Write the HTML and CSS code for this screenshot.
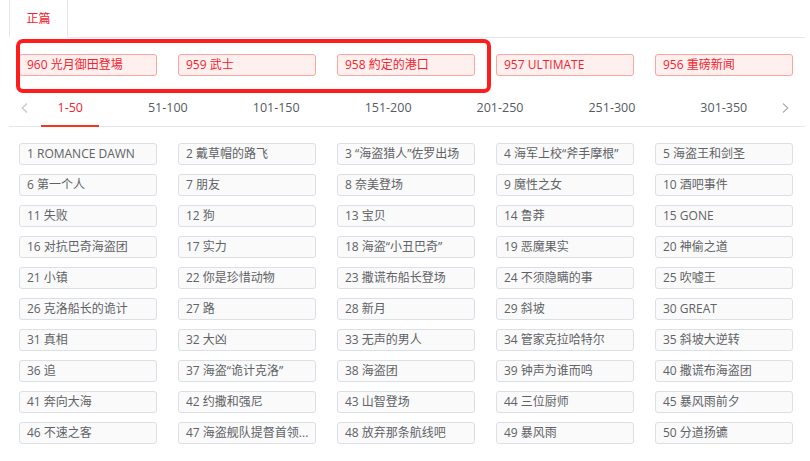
FILE: index.html
```html
<!DOCTYPE html>
<html lang="zh">
<head>
<meta charset="utf-8">
<title>正篇</title>
<link rel="stylesheet" href="styles.css">
</head>
<body>
<div class="page">
  <div class="top-tabs">
    <div class="top-tab is-active">正篇</div>
  </div>

  <div class="latest">
    <div class="latest-item">960 光月御田登場</div>
    <div class="latest-item">959 武士</div>
    <div class="latest-item">958 約定的港口</div>
    <div class="latest-item">957 ULTIMATE</div>
    <div class="latest-item">956 重磅新闻</div>
  </div>
  <div class="annot"></div>

  <div class="range-tabs">
    <span class="arrow arrow-left"><svg width="7" height="10" viewBox="0 0 7 10"><path d="M6 0.5 L1.2 5 L6 9.5" fill="none" stroke="#c0c4cc" stroke-width="1.1"/></svg></span>
    <div class="range-list">
      <div class="range-tab is-active">1-50</div>
      <div class="range-tab">51-100</div>
      <div class="range-tab">101-150</div>
      <div class="range-tab">151-200</div>
      <div class="range-tab">201-250</div>
      <div class="range-tab">251-300</div>
      <div class="range-tab">301-350</div>
    </div>
    <span class="arrow arrow-right"><svg width="7" height="10" viewBox="0 0 7 10"><path d="M1 0.5 L5.8 5 L1 9.5" fill="none" stroke="#a8abb2" stroke-width="1.1"/></svg></span>
  </div>

  <div class="chapters">
    <div class="chapter">1 ROMANCE DAWN</div>
    <div class="chapter">2 戴草帽的路飞</div>
    <div class="chapter">3 “海盗猎人”佐罗出场</div>
    <div class="chapter">4 海军上校“斧手摩根”</div>
    <div class="chapter">5 海盗王和剑圣</div>
    <div class="chapter">6 第一个人</div>
    <div class="chapter">7 朋友</div>
    <div class="chapter">8 奈美登场</div>
    <div class="chapter">9 魔性之女</div>
    <div class="chapter">10 酒吧事件</div>
    <div class="chapter">11 失败</div>
    <div class="chapter">12 狗</div>
    <div class="chapter">13 宝贝</div>
    <div class="chapter">14 鲁莽</div>
    <div class="chapter">15 GONE</div>
    <div class="chapter">16 对抗巴奇海盗团</div>
    <div class="chapter">17 实力</div>
    <div class="chapter">18 海盗“小丑巴奇”</div>
    <div class="chapter">19 恶魔果实</div>
    <div class="chapter">20 神偷之道</div>
    <div class="chapter">21 小镇</div>
    <div class="chapter">22 你是珍惜动物</div>
    <div class="chapter">23 撒谎布船长登场</div>
    <div class="chapter">24 不须隐瞒的事</div>
    <div class="chapter">25 吹嘘王</div>
    <div class="chapter">26 克洛船长的诡计</div>
    <div class="chapter">27 路</div>
    <div class="chapter">28 新月</div>
    <div class="chapter">29 斜坡</div>
    <div class="chapter">30 GREAT</div>
    <div class="chapter">31 真相</div>
    <div class="chapter">32 大凶</div>
    <div class="chapter">33 无声的男人</div>
    <div class="chapter">34 管家克拉哈特尔</div>
    <div class="chapter">35 斜坡大逆转</div>
    <div class="chapter">36 追</div>
    <div class="chapter">37 海盗“诡计克洛”</div>
    <div class="chapter">38 海盗团</div>
    <div class="chapter">39 钟声为谁而鸣</div>
    <div class="chapter">40 撒谎布海盗团</div>
    <div class="chapter">41 奔向大海</div>
    <div class="chapter">42 约撒和强尼</div>
    <div class="chapter">43 山智登场</div>
    <div class="chapter">44 三位厨师</div>
    <div class="chapter">45 暴风雨前夕</div>
    <div class="chapter">46 不速之客</div>
    <div class="chapter">47 海盗舰队提督首领...</div>
    <div class="chapter">48 放弃那条航线吧</div>
    <div class="chapter">49 暴风雨</div>
    <div class="chapter">50 分道扬镳</div>
  </div>
</div>
</body>
</html>
```

FILE: styles.css
```css
* { box-sizing: border-box; }

html, body {
  margin: 0;
  padding: 0;
  background: #fff;
}

body {
  font-family: "Open Sans", "Noto Sans CJK SC", sans-serif;
  font-size: 12px;
  color: #606266;
}

.page {
  position: relative;
  width: 810px;
  padding: 0 5px 0 9px;
}

/* top tabs */
.top-tabs {
  display: flex;
  height: 38px;
  border-bottom: 1px solid #e4e7ed;
}

.top-tab {
  width: 59px;
  height: 38px;
  margin-bottom: -1px;
  border-left: 1px solid #e4e7ed;
  border-right: 1px solid #e4e7ed;
  border-bottom: 1px solid #fff;
  background: #fff;
  display: flex;
  align-items: center;
  justify-content: center;
  padding-bottom: 2px;
  font-size: 12px;
}

.top-tab.is-active { color: #f5222d; }

/* latest chapters */
.latest {
  display: grid;
  grid-template-columns: repeat(5, 138px);
  column-gap: 21px;
  padding: 16px 0 0 10px;
}

.latest-item {
  height: 22px;
  line-height: 20px;
  padding: 0 7px;
  border: 1px solid #ffa39e;
  border-radius: 3px;
  background: #fff0f0;
  color: #f5222d;
  white-space: nowrap;
  overflow: hidden;
}

.annot {
  position: absolute;
  left: 16px;
  top: 39px;
  width: 475px;
  height: 54px;
  border: 4px solid #ff1c1c;
  border-radius: 7px;
  pointer-events: none;
}

/* range tabs */
.range-tabs {
  position: relative;
  margin-top: 12px;
  height: 39px;
  border-bottom: 1px solid #e4e7ed;
}

.range-list {
  display: flex;
  height: 38px;
  padding-left: 16px;
}

.range-tab {
  position: relative;
  height: 38px;
  line-height: 39px;
  padding: 0 32.5px;
  font-size: 12.5px;
  color: #555a63;
  white-space: nowrap;
}

.range-tab.is-active { color: #f5222d; }

.range-tab.is-active::after {
  content: "";
  position: absolute;
  left: 16px;
  right: 16px;
  bottom: -1px;
  height: 2px;
  background: #f2361c;
}

.arrow {
  position: absolute;
  top: 15px;
  display: flex;
}

.arrow-left { left: 12px; }
.arrow-right { right: 16px; }

/* chapter grid */
.chapters {
  display: grid;
  grid-template-columns: repeat(5, 138px);
  column-gap: 21px;
  row-gap: 9px;
  padding: 16px 0 0 10px;
}

.chapter {
  height: 22px;
  line-height: 20px;
  padding: 0 7px;
  border: 1px solid #dcdfe6;
  border-radius: 3px;
  background: #fafafa;
  color: #606266;
  white-space: nowrap;
  overflow: hidden;
}
```
